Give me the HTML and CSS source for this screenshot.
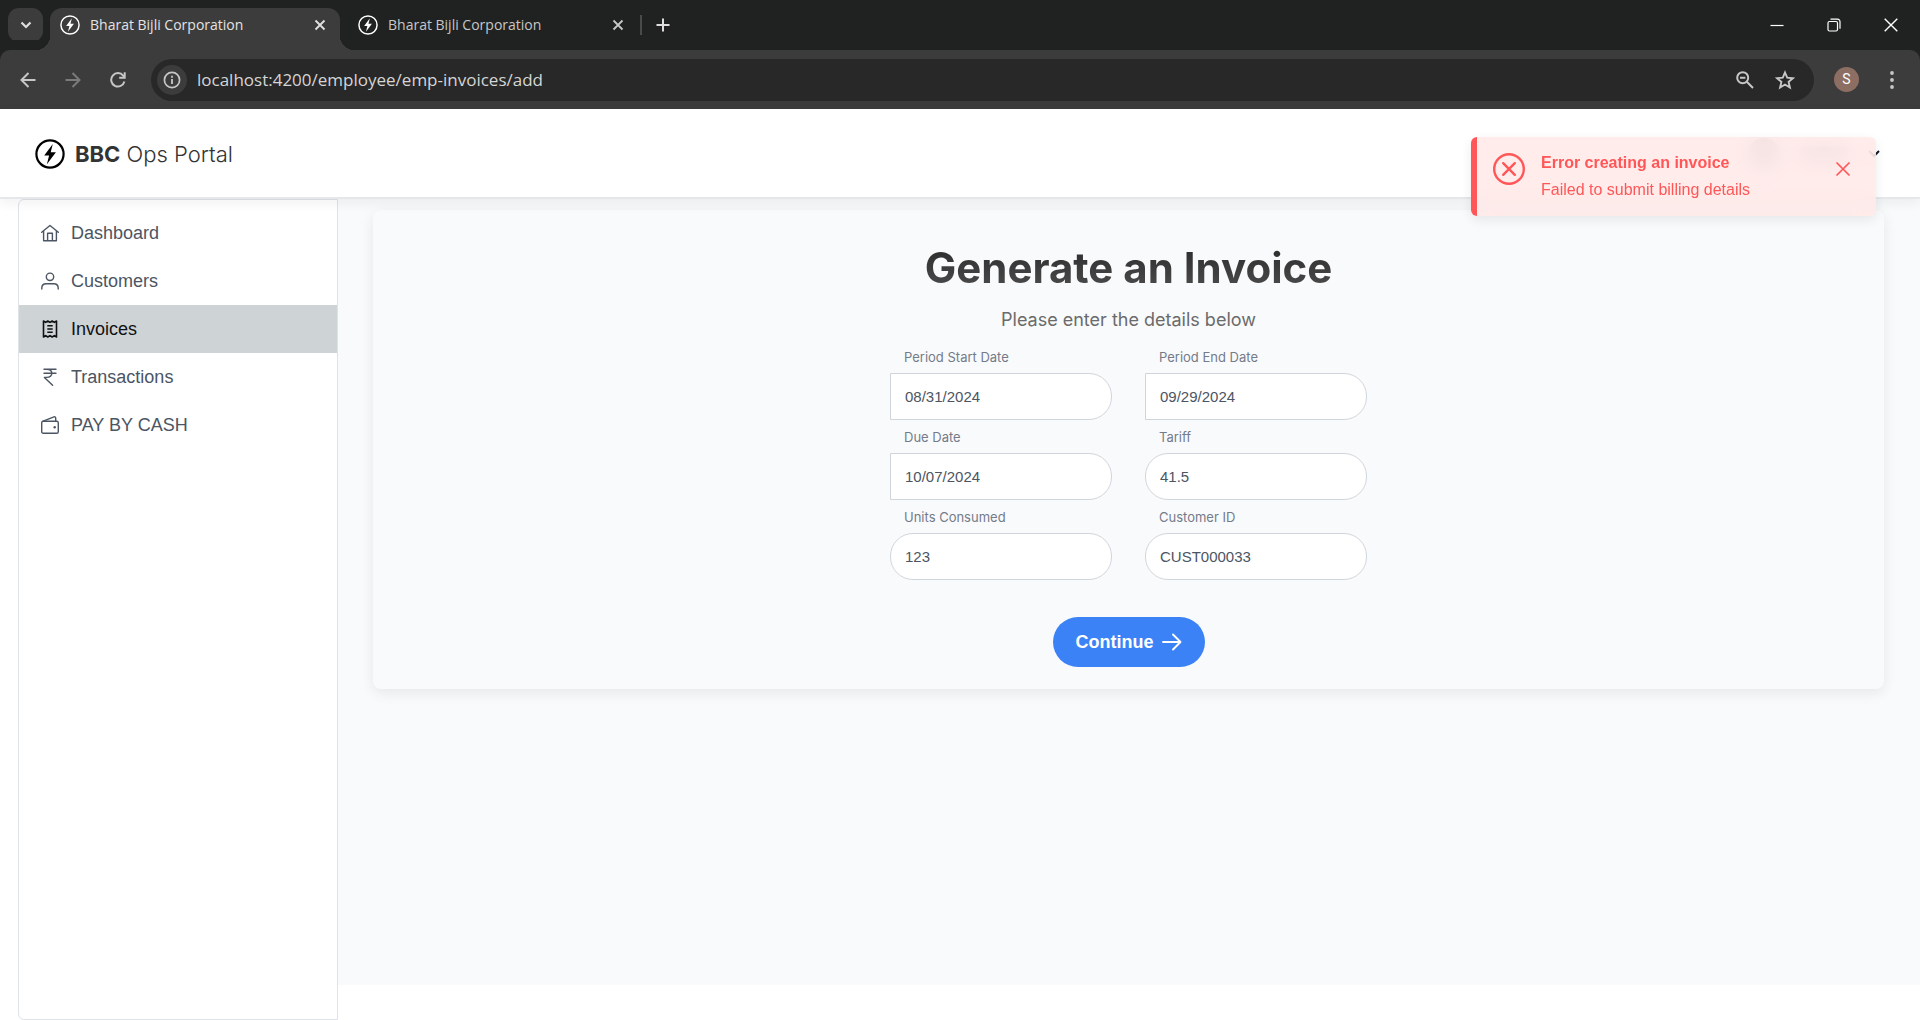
FILE: index.html
```html
<!DOCTYPE html>
<html lang="en">
<head>
<meta charset="utf-8">
<title>Bharat Bijli Corporation</title>
<link rel="stylesheet" href="styles.css">
</head>
<body>
<svg class="defs" aria-hidden="true">
  <symbol id="bolt" viewBox="0 0 30 30">
    <circle cx="15" cy="15" r="13.600" fill="none" stroke="currentColor" stroke-width="2.200"/>
    <path d="M17.800 5 9.200 16.600h4.900l-2.200 8.600 9-12h-5.200z" fill="currentColor"/>
  </symbol>
  <symbol id="cross" viewBox="0 0 12 12">
    <path d="M1.500 1.500l9 9M10.500 1.500l-9 9" fill="none" stroke="currentColor" stroke-width="1.800"/>
  </symbol>
</svg>

<div class="tabstrip">
  <button class="tab-search" aria-label="Search tabs"><svg width="12" height="8" viewBox="0 0 12 8"><path d="M1.500 1.500 6 6l4.500-4.500" fill="none" stroke="currentColor" stroke-width="2.200"/></svg></button>
  <div class="tab tab-active">
    <svg class="favicon"><use href="#bolt"/></svg>
    <span class="tab-title">Bharat Bijli Corporation</span>
    <button class="tab-close" aria-label="Close tab"><svg width="12" height="12"><use href="#cross"/></svg></button>
  </div>
  <div class="tab">
    <svg class="favicon"><use href="#bolt"/></svg>
    <span class="tab-title">Bharat Bijli Corporation</span>
    <button class="tab-close" aria-label="Close tab"><svg width="12" height="12"><use href="#cross"/></svg></button>
  </div>
  <span class="tab-divider"></span>
  <button class="tab-new" aria-label="New tab"><svg width="14" height="14" viewBox="0 0 14 14"><path d="M7 .5v13M.5 7h13" stroke="currentColor" stroke-width="2"/></svg></button>
  <div class="window-controls">
    <button aria-label="Minimize"><svg width="14" height="14" viewBox="0 0 14 14"><path d="M.5 7.500h13" stroke="currentColor" stroke-width="1.200"/></svg></button>
    <button aria-label="Restore"><svg width="14" height="14" viewBox="0 0 14 14"><g fill="none" stroke="currentColor" stroke-width="1.200"><rect x="1" y="3.500" width="9.500" height="9.500" rx="1.500"/><path d="M3.500 1.200h7a2.500 2.500 0 0 1 2.500 2.500v7"/></g></svg></button>
    <button aria-label="Close"><svg width="14" height="14" viewBox="0 0 14 14"><path d="M.7.700l12.600 12.600M13.300.700.700 13.300" stroke="currentColor" stroke-width="1.400"/></svg></button>
  </div>
</div>

<div class="toolbar">
  <nav class="history">
    <button aria-label="Back"><svg width="16" height="16" viewBox="0 0 16 16"><path d="M15.500 8H2M8.500 1 1.500 8l7 7" fill="none" stroke="currentColor" stroke-width="2"/></svg></button>
    <button class="dim" aria-label="Forward"><svg width="16" height="16" viewBox="0 0 16 16"><path d="M.5 8H14M7.500 1l7 7-7 7" fill="none" stroke="currentColor" stroke-width="2"/></svg></button>
    <button aria-label="Reload"><svg width="16" height="16" viewBox="0 0 16 16"><path d="M14.400 9.500A6.700 6.700 0 1 1 13.200 3.700L14.600 5.500" fill="none" stroke="currentColor" stroke-width="2"/><path d="M15.700.300v6.500H9.200V4.800h4.500V.3z" fill="currentColor"/></svg></button>
  </nav>
  <div class="address">
    <button class="site-info" aria-label="Site information"><svg width="18" height="18" viewBox="0 0 18 18"><circle cx="9" cy="9" r="7.600" fill="none" stroke="currentColor" stroke-width="1.700"/><path d="M9 8v5M9 4.800v1.900" stroke="currentColor" stroke-width="1.800"/></svg></button>
    <input class="url" aria-label="Address" value="localhost:4200/employee/emp-invoices/add">
    <button class="address-action" aria-label="Zoom"><svg width="18" height="18" viewBox="0 0 18 18"><g fill="none" stroke="currentColor" stroke-width="2"><circle cx="6.700" cy="6.700" r="5.500"/><path d="m10.800 10.800 6.200 6.200M4 6.700h5.400"/></g></svg></button>
    <button class="address-action" aria-label="Bookmark this page"><svg width="20" height="20" viewBox="0 0 20 20"><path d="m10 2.500 2.200 5.200 5.700.5-4.300 3.700 1.300 5.600L10 14.500l-4.900 3 1.300-5.600L2.100 8.200l5.700-.5z" fill="none" stroke="currentColor" stroke-width="1.900"/></svg></button>
  </div>
  <button class="profile" aria-label="Profile">S</button>
  <button class="more" aria-label="Menu"><svg width="4" height="18" viewBox="0 0 4 18"><g fill="currentColor"><circle cx="2" cy="2" r="1.900"/><circle cx="2" cy="9" r="1.900"/><circle cx="2" cy="16" r="1.900"/></g></svg></button>
</div>

<div class="app">
  <header class="header">
    <a class="brand" href="#"><svg class="brand-mark"><use href="#bolt"/></svg><span class="brand-name"><b>BBC</b> Ops Portal</span></a>
    <button class="account" aria-label="Account">
      <span class="avatar"></span>
      <span class="account-name"></span>
      <svg width="12" height="8" viewBox="0 0 12 8"><path d="m1 1 5 5 5-5" fill="none" stroke="currentColor" stroke-width="2"/></svg>
    </button>
  </header>

  <div class="body">
    <nav class="sidebar">
      <a class="nav-item" href="#"><svg width="18" height="18" viewBox="0 0 18 18"><path d="M.7 8.200 9 1.500l8.300 6.700M2.600 7v9.700h12.800V7M6.600 16.500V9.300h4.800v7.200" fill="none" stroke="currentColor" stroke-width="1.400" stroke-linecap="round" stroke-linejoin="round"/></svg>Dashboard</a>
      <a class="nav-item" href="#"><svg width="18" height="18" viewBox="0 0 18 18"><g fill="none" stroke="currentColor" stroke-width="1.400" stroke-linecap="round"><circle cx="9" cy="4.800" r="3.700"/><path d="M.8 17v-1c0-2.600 1.900-4.300 4.400-4.300h7.600c2.500 0 4.400 1.700 4.400 4.300v1"/></g></svg>Customers</a>
      <a class="nav-item nav-current" href="#"><svg width="18" height="18" viewBox="0 0 18 18"><path d="M2.500 1v16l2.200-1.400L6.800 17 9 15.600l2.200 1.400 2.100-1.400 2.200 1.400V1l-2.200 1.400L11.200 1 9 2.400 6.800 1 4.700 2.400zM6.300 5.800h5.400M6.300 9h5.400M6.300 12.200h5.400" fill="none" stroke="currentColor" stroke-width="1.600" stroke-linejoin="round"/></svg>Invoices</a>
      <a class="nav-item" href="#"><svg width="18" height="18" viewBox="0 0 18 18"><path d="M3 1.200h12M3 5.300h12M5.500 1.200c3 0 5.300 1.200 5.300 4.100S8.500 9.400 5.500 9.400H3.400l8.200 7.900" fill="none" stroke="currentColor" stroke-width="1.400" stroke-linecap="round" stroke-linejoin="round"/></svg>Transactions</a>
      <a class="nav-item" href="#"><svg width="18" height="18" viewBox="0 0 18 18"><g fill="none" stroke="currentColor" stroke-width="1.400" stroke-linejoin="round"><rect x=".7" y="5.300" width="16.600" height="12" rx="1.600"/><path d="M1.500 5.300 13 .9c1-.3 1.700.2 1.700 1.100v3.300"/></g><circle cx="13.700" cy="11.300" r="1.200" fill="currentColor"/></svg>PAY BY CASH</a>
    </nav>

    <main class="main">
      <section class="card">
        <h1 class="title">Generate an Invoice</h1>
        <p class="subtitle">Please enter the details below</p>
        <form class="form">
          <div class="fields">
            <div class="field"><label for="start">Period Start Date</label><input class="date" id="start" value="08/31/2024"></div>
            <div class="field"><label for="end">Period End Date</label><input class="date" id="end" value="09/29/2024"></div>
            <div class="field"><label for="due">Due Date</label><input class="date" id="due" value="10/07/2024"></div>
            <div class="field"><label for="tariff">Tariff</label><input id="tariff" value="41.5"></div>
            <div class="field"><label for="units">Units Consumed</label><input id="units" value="123"></div>
            <div class="field"><label for="customer">Customer ID</label><input id="customer" value="CUST000033"></div>
          </div>
          <button class="submit" type="button">Continue<svg width="20" height="18" viewBox="0 0 20 18"><path d="M1 9h17.500M11 1.500 18.500 9 11 16.500" fill="none" stroke="currentColor" stroke-width="1.900" stroke-linecap="round" stroke-linejoin="round"/></svg></button>
        </form>
      </section>
    </main>
  </div>

  <div class="toast" role="alert">
    <svg class="toast-icon" viewBox="0 0 32 32"><g fill="none" stroke="currentColor" stroke-width="2.400" stroke-linecap="round"><circle cx="16" cy="16" r="14.800"/><path d="m10.200 10.200 11.600 11.600M21.800 10.200 10.200 21.800"/></g></svg>
    <div class="toast-text">
      <strong>Error creating an invoice</strong>
      <span>Failed to submit billing details</span>
    </div>
    <button class="toast-close" aria-label="Dismiss"><svg width="14" height="14" viewBox="0 0 14 14"><path d="m1 1 12 12M13 1 1 13" stroke="currentColor" stroke-width="1.700" stroke-linecap="round"/></svg></button>
  </div>
</div>
</body>
</html>
```
FILE: styles.css
```css
* { box-sizing: border-box; }
body {
  margin: 0;
  min-height: 100vh;
  display: flex;
  flex-direction: column;
  background: #fff;
  font-family: "Liberation Sans", Arial, sans-serif;
}
button { border: 0; padding: 0; background: none; color: inherit; font: inherit; display: flex; align-items: center; justify-content: center; }
a { color: inherit; text-decoration: none; }
svg { display: block; flex: none; }
.defs { position: absolute; width: 0; height: 0; }

/* Browser tabs */
.tabstrip { height: 50px; display: flex; align-items: center; background: #202221; color: #dedede; padding-left: 8px; }
.tab-search { width: 35px; height: 34px; border-radius: 11px; background: #3c3c3c; margin-right: 7px; }
.tab { position: relative; height: 42px; width: 290px; margin-top: 8px; padding: 0 14px 8px 10px; display: flex; align-items: center; gap: 10px; color: #c7c7c7; }
.tab + .tab { margin-left: 8px; }
.tab-active { background: #3c3c3c; color: #e3e3e3; border-radius: 12px 12px 0 0; }
.tab-active::before, .tab-active::after { content: ""; position: absolute; bottom: 0; width: 14px; height: 14px; }
.tab-active::before { right: 100%; background: radial-gradient(circle at 0 0, transparent 14px, #3c3c3c 14px); }
.tab-active::after { left: 100%; background: radial-gradient(circle at 100% 0, transparent 14px, #3c3c3c 14px); }
.favicon { width: 20px; height: 20px; color: #fff; }
.tab-title { flex: 1; font: 14px/20px "Open Sans", sans-serif; white-space: nowrap; }
.tab-divider { width: 2px; height: 20px; background: #4a4a4a; margin: 0 14px 0 2px; }
.window-controls { margin-left: auto; display: flex; color: #fff; padding-right: 1px; }
.window-controls button { width: 57px; height: 50px; }

/* Browser toolbar */
.toolbar { height: 59px; display: flex; align-items: center; background: #3c3c3c; color: #c7c7c7; border-radius: 10px 10px 0 0; box-shadow: 0 -10px 0 #202221; padding: 0 26px 0 20px; }
.history { display: flex; gap: 29px; margin-right: 25px; }
.history .dim { color: #7b7b7b; }
.toolbar .address { flex: 1; height: 42px; border-radius: 21px; background: #282828; display: flex; align-items: center; padding: 0 19px 0 6px; }
.site-info { width: 30px; height: 30px; border-radius: 50%; background: #3c3c3c; }
.url { flex: 1; border: 0; outline: 0; padding: 0; margin-left: 10px; background: none; color: #d5d5d5; font: 17px/24px "Open Sans", sans-serif; }
.address-action { margin-left: 21px; }
.profile { width: 25px; height: 25px; border-radius: 50%; background: #8d6e63; color: #fff; font: 14px/25px Roboto, sans-serif; margin: 0 31px 0 20px; }

/* Application shell */
.app { position: relative; flex: 1; display: flex; flex-direction: column; }
.header { position: relative; height: 90px; display: flex; align-items: center; justify-content: space-between; background: #fff; border-bottom: 2px solid #e5e7eb; box-shadow: 0 4px 12px rgba(0, 0, 0, .06); padding: 1px 40px 0 35px; }
.brand { display: flex; align-items: center; gap: 10px; }
.brand-mark { width: 30px; height: 30px; color: #000; }
.brand-name { font: 300 22px/32px Inter, sans-serif; color: #333; }
.brand-name b { font-weight: 700; }
.account { gap: 20px; color: #111827; }
.avatar { width: 32px; height: 32px; border-radius: 50%; background: #c9ced8; }
.account-name { width: 48px; height: 14px; background: #c4c7cd; }

.body { flex: 1; display: flex; padding-left: 18px; }
.sidebar { width: 320px; background: #fff; border: 1px solid #dfe2e6; border-radius: 6px 0 0 6px; padding-top: 9px; }
.nav-item { height: 48px; display: flex; align-items: center; gap: 12px; padding-left: 22px; color: #4b5563; font-size: 18px; }
.nav-current { background: #ced3d6; color: #111; }

.main { flex: 1; background: #f9fafc; margin-bottom: 35px; padding: 11px 36px 0 35px; }
.card { border-radius: 8px; background: #f9fafc; box-shadow: 0 4px 14px rgba(0, 0, 0, .08); padding: 28px 0 22px; display: flex; flex-direction: column; align-items: center; }
.title { margin: 0; font: 700 42px/60px Inter, sans-serif; background: linear-gradient(#262626, #525252); background-clip: text; -webkit-background-clip: text; color: transparent; }
.subtitle { margin: 8px 0 15px; font: 18px/28px Inter, sans-serif; color: #6b6b6b; }
.form { display: flex; flex-direction: column; align-items: center; gap: 36px; }
.fields { display: grid; grid-template-columns: 222px 222px; gap: 8px 33px; }
.field { display: flex; flex-direction: column; }
.field label { padding-left: 14px; font: 13px/16px Inter, sans-serif; color: #747b89; margin-bottom: 8px; }
.field input { height: 47px; width: 100%; border: 1px solid #d1d5db; border-radius: 23px; background: #fff; padding: 0 14px 1px; font: 15px "Liberation Sans", Arial, sans-serif; color: #4b5563; outline: 0; }
.field + .field input { margin-bottom: 1px; }
.field .date { border-top-left-radius: 0; border-bottom-left-radius: 0; }
.submit { width: 152px; height: 50px; border-radius: 25px; background: #3b82f6; color: #fff; font-weight: 700; font-size: 18px; gap: 8px; }

/* Notification */
.toast { position: absolute; top: 28px; right: 44px; width: 405px; height: 79px; display: flex; align-items: flex-start; border-left: 6px solid #ff5757; border-radius: 6px; background: rgba(255, 231, 230, .8); backdrop-filter: blur(10px); box-shadow: 0 4px 12px rgba(0, 0, 0, .08); color: #ff5757; padding: 16px 26px 0 16px; }
.toast-icon { width: 32px; height: 32px; margin-right: 16px; }
.toast-text { flex: 1; display: flex; flex-direction: column; gap: 8px; font-size: 16px; line-height: 19px; }
.toast-close { height: 32px; }
```
